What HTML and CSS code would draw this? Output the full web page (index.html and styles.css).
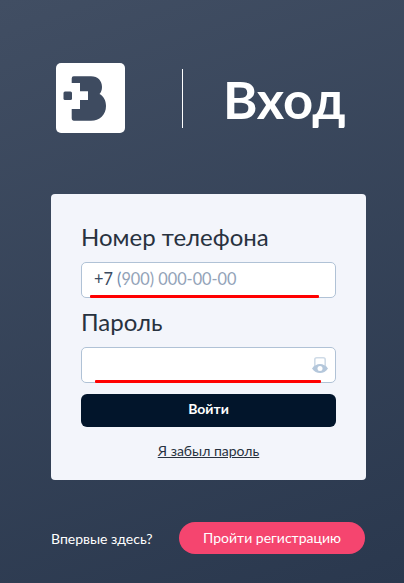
FILE: index.html
```html
<!DOCTYPE html>
<html lang="ru">
<head>
    <meta charset="UTF-8">
    <title>Вход</title>
    <link rel="stylesheet" href="styles.css">
</head>
<body>
<div class="page">
    <header class="head">
        <svg class="logo" viewBox="0 0 69 70" width="69" height="70">
            <rect width="69" height="70" rx="5" fill="#fff"/>
            <rect x="7.5" y="28.5" width="8.5" height="8.5" rx="1.5" fill="#3e4b60"/>
            <path d="M17.7 13.3H35C42 13.3 46 18 46 24C46 27 45 29.5 43.5 31C47.5 33 50 37.5 50 43C50 52 43.5 57.7 35 57.7H18Q15.7 57.7 15.7 55V46H24V37H32V28.3H24V20H15.7V15.5Q15.7 13.3 17.7 13.3Z" fill="#3e4b60"/>
        </svg>
        <div class="divider"></div>
        <h1 class="title">Вход</h1>
    </header>

    <form class="card">
        <div class="label">Номер телефона</div>
        <div class="field">
            <span class="value"><span class="prefix">+7 </span><span class="bracket">(</span><span class="mask">900) 000-00-00</span></span>
            <div class="underline phone"></div>
        </div>
        <div class="label second">Пароль</div>
        <div class="field">
            <svg class="eye" viewBox="0 0 16 17" width="16" height="17">
                <rect x="2.8" y="0.8" width="10.4" height="10.4" rx="2" fill="none" stroke="#cfdbe7" stroke-width="1.6"/>
                <path d="M0 11.5C2 8.5 5 7 8 7C11 7 14 8.5 16 11.5C14 14.5 11 16 8 16C5 16 2 14.5 0 11.5Z" fill="#b4c7db"/>
                <circle cx="8" cy="11.5" r="2.5" fill="#fff"/>
            </svg>
            <div class="underline pass"></div>
        </div>
        <button class="submit" type="button">Войти</button>
        <a class="forgot" href="javascript:;">Я забыл пароль</a>
    </form>

    <footer class="foot">
        <span class="first">Впервые здесь?</span>
        <a class="register" href="javascript:;">Пройти регистрацию</a>
    </footer>
</div>
</body>
</html>
```

FILE: styles.css
```css
* {
    margin: 0;
    padding: 0;
    box-sizing: border-box;
}

html, body {
    height: 100%;
}

body {
    font-family: "Lato", "Noto Sans", sans-serif;
    overflow: hidden;
}

.page {
    height: 583px;
    padding: 63px 38px 0 51px;
    background: linear-gradient(160deg, #414e63 0%, #2a384e 100%);
}

.head {
    display: flex;
    align-items: center;
    height: 70px;
    padding-left: 5px;
}

.logo {
    flex: none;
}

.divider {
    width: 1px;
    height: 59px;
    margin-left: 57px;
    background-color: #fff;
}

.title {
    margin-left: 40px;
    font-size: 52.5px;
    font-weight: 700;
    color: #fff;
}

.card {
    display: flex;
    flex-direction: column;
    width: 315px;
    height: 286px;
    margin-top: 61px;
    padding: 27px 30px 0;
    border-radius: 4px;
    background-color: #f3f5fb;
}

.label {
    font-size: 24px;
    line-height: 32px;
    color: #28323f;
}

.second {
    margin-top: 8px;
}

.field {
    position: relative;
    display: flex;
    align-items: center;
    height: 36px;
    margin-top: 9px;
    padding: 0 12px 3px;
    border: 1px solid #b0c2d6;
    border-radius: 5px;
    background-color: #fff;
    font-size: 16.3px;
}

.value {
    white-space: pre;
}

.prefix {
    color: #3a4a60;
}

.bracket {
    color: #6f8db0;
}

.mask {
    color: #93a3b8;
}

.underline {
    position: absolute;
    bottom: -1px;
    height: 3px;
    border-radius: 1px;
    background-color: #f00;
}

.phone {
    left: 8px;
    width: 229px;
}

.pass {
    left: 13px;
    width: 226px;
}

.eye {
    position: absolute;
    right: 7px;
    top: 9px;
}

.submit {
    height: 33px;
    margin-top: 11px;
    padding-bottom: 4px;
    border: 0;
    border-radius: 6px;
    background-color: #02152b;
    font-family: inherit;
    font-size: 14px;
    font-weight: 700;
    color: #fff;
}

.forgot {
    align-self: center;
    margin-top: 15px;
    font-size: 14px;
    color: #28323f;
}

.foot {
    display: flex;
    align-items: center;
    justify-content: space-between;
    width: 314px;
    margin-top: 42px;
}

.first {
    font-size: 14px;
    color: #fff;
}

.register {
    width: 186px;
    height: 32px;
    border-radius: 16px;
    background-color: #f5456f;
    font-size: 14px;
    line-height: 32px;
    text-align: center;
    text-decoration: none;
    color: #fff;
}
```
